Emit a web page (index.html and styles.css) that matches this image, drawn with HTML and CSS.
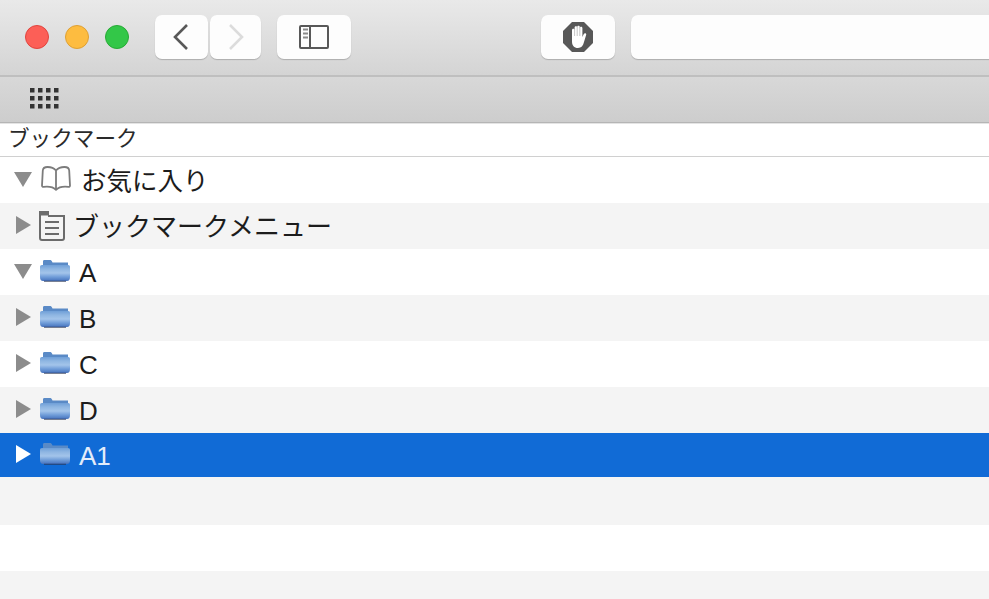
FILE: index.html
```html
<!DOCTYPE html>
<html lang="ja">
<head>
<meta charset="utf-8">
<title>ブックマーク</title>
<link rel="stylesheet" href="styles.css">
</head>
<body>
<header class="titlebar">
  <div class="lights">
    <span class="light red"></span>
    <span class="light yellow"></span>
    <span class="light green"></span>
  </div>
  <div class="nav">
    <button class="btn back"><svg width="18" height="28" viewBox="0 0 18 28"><path d="M15 2 3 14l12 12" fill="none" stroke="#585858" stroke-width="2.6"/></svg></button>
    <button class="btn forward"><svg width="18" height="28" viewBox="0 0 18 28"><path d="M3 2l12 12L3 26" fill="none" stroke="#dcdcdc" stroke-width="2.6"/></svg></button>
  </div>
  <button class="btn sidebar"><svg width="30" height="24" viewBox="0 0 30 24"><rect x="1" y="1" width="28" height="22" rx="1" fill="none" stroke="#585858" stroke-width="2"/><path d="M11 1v22" stroke="#585858" stroke-width="2"/><path d="M4 4.500h5M4 8.500h5M4 12.500h5" stroke="#8a8a8a" stroke-width="2"/></svg></button>
  <button class="btn block"><svg width="30" height="30" viewBox="0 0 30 30"><path d="M9 0h12l9 9v12l-9 9H9l-9-9V9z" fill="#585858"/><path d="M9 14V8c0-1.700 2.600-1.700 2.600 0V5.500c0-1.700 2.600-1.700 2.600 0V5c0-1.700 2.600-1.700 2.600 0v1c0-1.700 2.600-1.700 2.600 0v9l1.400-3c.7-1.500 2.900-.8 2.400.8l-2.200 7.200C20.200 23.800 18.200 26 15 26c-4 0-6-2.500-6-6.500z" fill="#fff"/><path d="M11.600 7v7M14.200 5v9M16.800 5v9" stroke="#b8b8b8" stroke-width=".8"/></svg></button>
  <div class="search"></div>
</header>
<div class="bookmarksbar">
  <svg class="grid" width="29" height="21" viewBox="0 0 29 21" fill="#333">
    <rect x="0" y="0" width="4.500" height="4.500"/><rect x="8" y="0" width="4.500" height="4.500"/><rect x="16" y="0" width="4.500" height="4.500"/><rect x="24" y="0" width="4.500" height="4.500"/>
    <rect x="0" y="8" width="4.500" height="4.500"/><rect x="8" y="8" width="4.500" height="4.500"/><rect x="16" y="8" width="4.500" height="4.500"/><rect x="24" y="8" width="4.500" height="4.500"/>
    <rect x="0" y="16" width="4.500" height="4.500"/><rect x="8" y="16" width="4.500" height="4.500"/><rect x="16" y="16" width="4.500" height="4.500"/><rect x="24" y="16" width="4.500" height="4.500"/>
  </svg>
</div>
<div class="colhead">ブックマーク</div>
<svg class="defs" width="0" height="0">
  <defs>
    <linearGradient id="fb" x1="0" y1="0" x2="0" y2="1">
      <stop offset="0" stop-color="#6f9fd8"/><stop offset=".25" stop-color="#8fb6e2"/><stop offset=".5" stop-color="#a3c4ea"/><stop offset=".75" stop-color="#6f9cd8"/><stop offset="1" stop-color="#4672bd"/>
    </linearGradient>
    <symbol id="folder" viewBox="0 0 30 24">
      <path d="M3 1.500C3 .5 3.500 0 4.500 0H10c1 0 1.500 .5 2 1.500L12.500 2.500H28V6H3z" fill="#5a8ac6"/>
      <path d="M0 7c0-1.300 .7-2 2-2h26c1.300 0 2 .7 2 2v10c0 2.500-1 4-3 4H3c-2 0-3-1.500-3-4z" fill="url(#fb)"/>
      <path d="M4 21.300h22" stroke="#2c3857" stroke-width="1.200" opacity=".7"/>
    </symbol>
  </defs>
</svg>
<main class="list">
  <div class="row">
    <span class="tri down"></span>
    <svg class="icon book" width="32" height="25" viewBox="0 0 32 25"><path d="M16 4.500C14 2 11 1 7.500 1 4.500 1 3 2 2.800 4.500L2 19.500c0 1 .6 1.500 1.600 1.400 5-.6 9.400-.2 12.400 3 3-3.200 7.400-3.600 12.400-3 1 .1 1.600-.4 1.600-1.400L29.200 4.500C29 2 27.500 1 24.500 1 21 1 18 2 16 4.500zm0 0V23" fill="none" stroke="#7c7c7c" stroke-width="1.800" stroke-linejoin="round"/></svg>
    <span class="label fav">お気に入り</span>
  </div>
  <div class="row alt">
    <span class="tri right"></span>
    <svg class="icon doc" width="26" height="30" viewBox="0 0 26 30"><path d="M0 0h10v4.500H0z" fill="#6b6b6b"/><path d="M1 4V27c0 1.200.8 2 2 2h20c1.200 0 2-.8 2-2V5H9" fill="none" stroke="#6b6b6b" stroke-width="2"/><path d="M6 11h14M6 17h14M6 23h14" stroke="#6b6b6b" stroke-width="2"/></svg>
    <span class="label menu">ブックマークメニュー</span>
  </div>
  <div class="row">
    <span class="tri down"></span>
    <svg class="icon folder" width="30" height="24"><use href="#folder"/></svg>
    <span class="label">A</span>
  </div>
  <div class="row alt">
    <span class="tri right"></span>
    <svg class="icon folder" width="30" height="24"><use href="#folder"/></svg>
    <span class="label">B</span>
  </div>
  <div class="row">
    <span class="tri right"></span>
    <svg class="icon folder" width="30" height="24"><use href="#folder"/></svg>
    <span class="label">C</span>
  </div>
  <div class="row alt">
    <span class="tri right"></span>
    <svg class="icon folder" width="30" height="24"><use href="#folder"/></svg>
    <span class="label">D</span>
  </div>
  <div class="row selected">
    <span class="tri right"></span>
    <svg class="icon folder" width="30" height="24"><use href="#folder"/></svg>
    <span class="label">A1</span>
  </div>
  <div class="row alt tall"></div>
  <div class="row"></div>
  <div class="row alt"></div>
</main>
</body>
</html>
```
FILE: styles.css
```css
* { box-sizing: border-box; }
html, body { margin: 0; padding: 0; height: 100%; overflow: hidden; background: #fff; }
body { font-family: "Liberation Sans", "Noto Sans CJK JP", sans-serif; color: #1c1c1c; }

.titlebar {
  height: 77px;
  display: flex;
  align-items: flex-start;
  padding: 15px 0 0 25px;
  background: linear-gradient(#e9e9e9, #d4d4d4);
  border-bottom: 2px solid #bfbfbf;
  overflow: hidden;
}
.lights { flex: none; display: flex; gap: 16px; margin-top: 10px; }
.light { width: 24px; height: 24px; border-radius: 50%; border: 1px solid; }
.red { background: #fc5f57; border-color: #e0443e; }
.yellow { background: #fdbc40; border-color: #dea034; }
.green { background: #33c748; border-color: #27aa35; }

.btn {
  flex: none;
  height: 44px;
  padding: 0;
  border: 0;
  border-radius: 7px;
  background: #fdfdfd;
  box-shadow: 0 1px 1px rgba(0, 0, 0, .2);
  display: flex;
  align-items: center;
  justify-content: center;
}
.nav { flex: none; display: flex; gap: 2px; margin-left: 26px; }
.back { width: 53px; padding-right: 2px; }
.forward { width: 51px; }
.sidebar { width: 74px; margin-left: 16px; }
.block { width: 74px; margin-left: 190px; }
.search {
  flex: none;
  width: 420px;
  height: 44px;
  margin-left: 16px;
  border-radius: 7px 0 0 7px;
  background: #fdfdfd;
  box-shadow: 0 1px 1px rgba(0, 0, 0, .2);
}

.bookmarksbar {
  height: 46px;
  display: flex;
  align-items: center;
  padding: 0 0 2px 30px;
  background: linear-gradient(#d8d8d8, #cdcdcd);
  border-bottom: 1px solid #b5b5b5;
}
.colhead {
  height: 34px;
  padding-left: 8px;
  font-size: 21.600px;
  line-height: 32px;
  color: #2a2a2a;
  border-bottom: 1px solid #d0d0d0;
  background: #fff;
  box-shadow: inset 0 1px 0 #e4e4e4;
}
.defs { position: absolute; }

.row {
  position: relative;
  height: 46px;
  display: flex;
  align-items: center;
  padding-bottom: 3px;
  background: #fff;
}
.alt { background: #f4f4f4; }
.tall { height: 48px; }
.selected { height: 44px; background: #116bd6; color: #e3ecfa; }

.tri { flex: none; width: 0; height: 0; border-style: solid; border-color: transparent; }
.down { margin-left: 14px; margin-top: 2px; border-width: 15px 9px 0; border-top-color: #8c8c8c; }
.right { margin-left: 16px; border-width: 9px 0 9px 15px; border-left-color: #8c8c8c; }
.selected .right { border-left-color: #fff; }

.icon { flex: none; }
.book { margin-left: 8px; margin-top: -1px; }
.doc { margin-left: 8px; margin-top: 3px; }
.down + .folder { margin-left: 8px; margin-top: 3px; }
.right + .folder { margin-left: 9px; margin-top: 3px; }

.label { font-size: 26px; line-height: 34px; margin-left: 9px; margin-top: 4px; }
.fav { font-size: 25.500px; margin-left: 9px; margin-top: 4px; }
.menu { font-size: 26px; margin-left: 8px; margin-top: 4px; }
```
